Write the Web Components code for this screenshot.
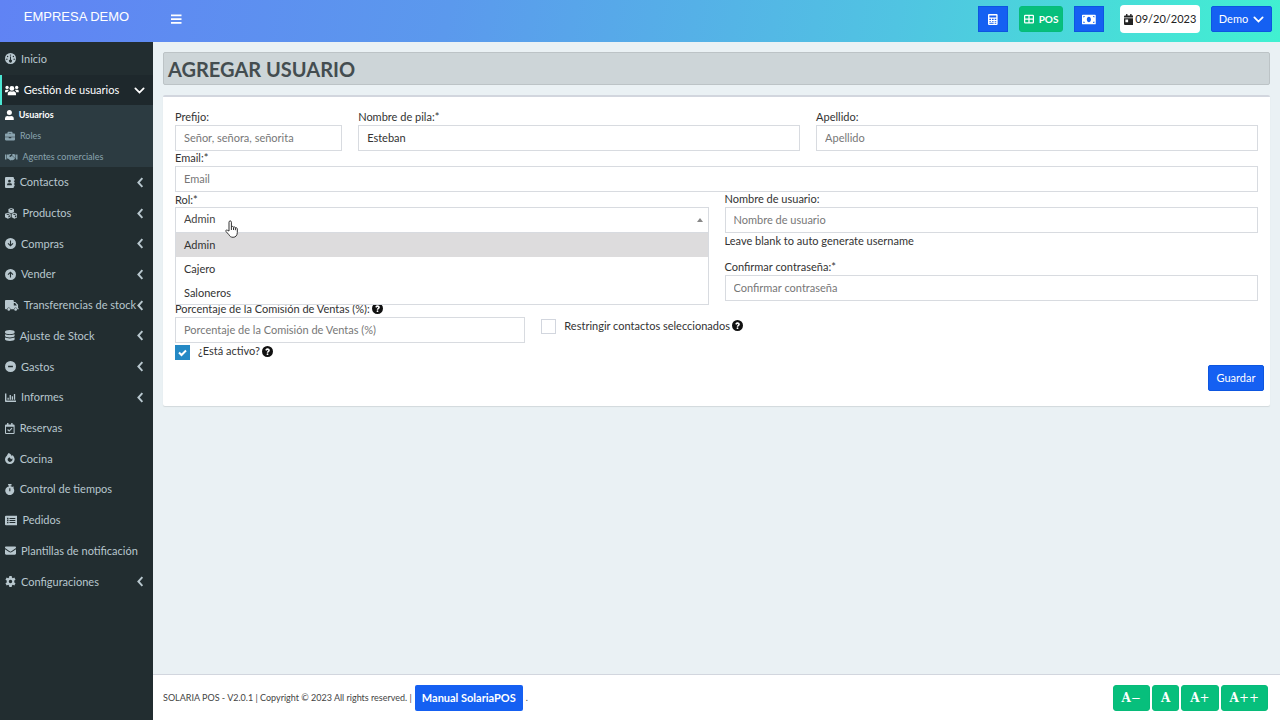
<!DOCTYPE html>
<html lang="es">
<head>
<meta charset="utf-8">
<title>Agregar usuario - Solaria POS</title>
<meta name="viewport" content="width=device-width, initial-scale=1">
<style>
  body { margin: 0; font-family: Lato, "Open Sans", sans-serif; font-size: 11px; line-height: 16px; color: #333; }
</style>
</head>
<body>
<sp-app></sp-app>
<script>
const BASE = `*, *::before, *::after { box-sizing: border-box; } button, input, select { font: inherit; margin: 0; }`;

class SpElement extends HTMLElement {
  connectedCallback() {
    if (this.shadowRoot) return;
    const tpl = document.createElement('template');
    tpl.innerHTML = `<style>${BASE}${this.css()}</style>${this.html()}`;
    this.attachShadow({ mode: 'open' }).append(tpl.content.cloneNode(true));
  }
  attr(name, fallback = '') { return this.getAttribute(name) ?? fallback; }
}

/* Icon set: [width, markup]; every icon is drawn in a box 16 units high. */
const ICONS = {
  bars: [14, '<path d="M0 2h14v2.2H0zM0 7h14v2.2H0zM0 12h14v2.2H0z"/>'],
  gauge: [16, '<path fill-rule="evenodd" d="M8 0a8 8 0 1 1 0 16A8 8 0 0 1 8 0zM8 2a1 1 0 1 0 0 2a1 1 0 0 0 0-2zM3.800 4a1 1 0 1 0 0 2a1 1 0 0 0 0-2zM12.200 4a1 1 0 1 0 0 2a1 1 0 0 0 0-2zM2.700 8a1 1 0 1 0 0 2a1 1 0 0 0 0-2zM13.300 8a1 1 0 1 0 0 2a1 1 0 0 0 0-2zM7.300 5v4.600a2.200 2.200 0 1 0 1.400 0V5z"/>'],
  users: [20, '<circle cx="3" cy="3.500" r="2.400"/><circle cx="17" cy="3.500" r="2.400"/><circle cx="10" cy="5" r="3.500"/><path d="M0 10.500V9a2 2 0 0 1 2-2h2.200c.6 0 1 .2 1.400.6C4.400 8.300 3.800 9.300 3.600 10.500zM20 10.500V9a2 2 0 0 0-2-2h-2.200c-.6 0-1 .2-1.400.6 1.200.7 1.800 1.700 2 2.900zM4 15v-2.200C4 10.700 5.600 9 7.600 9c1.500.7 3.300.7 4.800 0 2 0 3.600 1.700 3.600 3.800V15z"/>'],
  user: [14, '<circle cx="7" cy="4" r="4"/><path d="M0 16v-2.300A4.200 4.200 0 0 1 4.200 9.400c1.800.8 3.800.8 5.600 0A4.200 4.200 0 0 1 14 13.700V16z"/>'],
  briefcase: [16, '<path fill-rule="evenodd" d="M4 4V2.500C4 1.700 4.700 1 5.500 1h5c.8 0 1.500.7 1.500 1.500V4h2.500c.8 0 1.500.7 1.500 1.500V9H0V5.500C0 4.700.7 4 1.500 4zm2 0h4V3H6zM0 10h6v1.500h4V10h6v3.500c0 .8-.7 1.500-1.500 1.500h-13C.7 15 0 14.300 0 13.500z"/>'],
  handshake: [20, '<path d="M0 4h2.300v8H0zM17.700 4H20v8h-2.300zM3.200 4h2.900l1.700-1h2.600L7.300 6c-.8.800.4 2.500 1.900 1.500l2-1.500 4.400 4.100c.8 1-.6 2-1.300 1.400.3 1.200-1 1.700-1.700 1.100-.5 1-1.700.9-2.200.3-.8.8-1.900.6-2.600 0L4.600 10.500H3.200zM12 3h2.200l1.700 1h.9v6.300L11.300 5z"/>'],
  contacts: [14, '<path fill-rule="evenodd" d="M1.500 0h10A1.500 1.500 0 0 1 13 1.500V3h1v2.500h-1V7h1v2.500h-1V11h1v2.500h-1v1a1.500 1.500 0 0 1-1.500 1.500h-10A1.500 1.500 0 0 1 0 14.500v-13A1.500 1.500 0 0 1 1.500 0zM6.500 4a2 2 0 1 0 0 4a2 2 0 0 0 0-4zM3 12h7v-1a2 2 0 0 0-2-2H5a2 2 0 0 0-2 2z"/>'],
  cubes: [18, '<path fill-rule="evenodd" d="M9 0l4 1.500v4.500L9 7.500 5 6V1.500zM9 1.200L6.700 2.100 9 3l2.300-.9zM4.300 7l4 1.500v5L4.300 15.500 0 13.500v-5zM4.300 8.300l-2.500.9 2.500 1 2.500-1zM5 11.300v2.600l2.100-1v-2.500zM13.700 7L18 8.500v5l-4.300 2-4-2v-5zM13.700 8.300l-2.500.9 2.500 1 2.500-1zM14.400 11.300v2.600l2.200-1v-2.500z"/>'],
  down: [16, '<path fill-rule="evenodd" d="M8 0a8 8 0 1 1 0 16A8 8 0 0 1 8 0zM7.200 3.500v5.800L5 7.100 3.800 8.200 8 12.400l4.200-4.200L11 7.100 8.800 9.300V3.500z"/>'],
  up: [16, '<path fill-rule="evenodd" d="M8 0a8 8 0 1 1 0 16A8 8 0 0 1 8 0zM7.200 12.500V6.700L5 8.900 3.800 7.800 8 3.600l4.200 4.200L11 8.900 8.800 6.700v5.800z"/>'],
  truck: [20, '<path fill-rule="evenodd" d="M1.500 0h9.800c.8 0 1.500.7 1.500 1.500V3h2.300l3.900 3.900V12h1v1.500h-2a2.500 2.500 0 0 0-5 0H8a2.500 2.500 0 0 0-5 0H1.500C.7 13.500 0 12.800 0 12V1.500C0 .7.700 0 1.500 0zm11.300 4.500V8h4.500l-2.700-3.500z"/><circle cx="5.500" cy="13.700" r="2"/><circle cx="15.500" cy="13.700" r="2"/>'],
  database: [14, '<path d="M0 2.500C0 1.100 3.100 0 7 0s7 1.100 7 2.500v1C14 4.900 10.900 6 7 6S0 4.900 0 3.500zM0 6c3 1.600 11 1.600 14 0v2.500C14 9.900 10.900 11 7 11S0 9.900 0 8.500zM0 11c3 1.600 11 1.600 14 0v2.500c0 1.400-3.100 2.500-7 2.500s-7-1.100-7-2.500z"/>'],
  minus: [16, '<path fill-rule="evenodd" d="M8 0a8 8 0 1 1 0 16A8 8 0 0 1 8 0zM4.500 7v2.200h7V7z"/>'],
  chart: [16, '<path d="M0 2h2v10.500h14v2H1A1 1 0 0 1 0 13.500zM3.600 8.300h1.900v3H3.600zM6.700 4.300h1.900v7H6.700zM9.800 6.300h1.900v5H9.800zM12.900 3h1.900v8.300h-1.900z"/>'],
  calcheck: [14, '<path fill-rule="evenodd" d="M3 0h2v2h4V0h2v2h1.500A1.500 1.500 0 0 1 14 3.500v11a1.500 1.500 0 0 1-1.500 1.500h-11A1.500 1.500 0 0 1 0 14.500v-11A1.500 1.500 0 0 1 1.500 2H3zM1.500 5.500v9h11v-9zM3.200 10l1.200-1.200 1.700 1.600 3.500-3.500 1.200 1.200-4.700 4.800z"/>'],
  fire: [14, '<path fill-rule="evenodd" d="M5.500 0C8 1 9.600 3 9.800 4.800c.6-.5.9-1.200 1-2C13 4.700 14 7 14 9.300A6.900 6.900 0 0 1 7 16a6.900 6.900 0 0 1-7-6.700C0 6 2.400 4.600 3.300 2.800c.5-1 .9-1.700 2.200-2.800zM4 8.200A3.700 3.700 0 0 0 7 13a3.700 3.700 0 0 0 3.500-5.200L9 9.200 6.200 6z"/>'],
  stopwatch: [14, '<path fill-rule="evenodd" d="M4.500 0h5v2H8v1.200c1.100.2 2 .6 2.800 1.200l1-1L13 4.600l-1 1A6.500 6.500 0 1 1 6 3.200V2H4.500zM6.200 6v4.500h1.600V6z"/>'],
  list: [18, '<path fill-rule="evenodd" d="M1.500 1h15A1.500 1.500 0 0 1 18 2.500v11a1.500 1.500 0 0 1-1.500 1.500h-15A1.500 1.500 0 0 1 0 13.500v-11A1.500 1.500 0 0 1 1.500 1zM3 4v2h2V4zm0 3v2h2V7zm0 3v2h2v-2zM6.500 4.200v1.500H15V4.200zm0 3v1.500H15V7.200zm0 3v1.500H15v-1.500z"/>'],
  mail: [16, '<path d="M1.500 2h13c.8 0 1.500.7 1.500 1.500v.8L9.300 9.200c-.8.600-1.800.6-2.600 0L0 4.300v-.8C0 2.700.7 2 1.500 2zM0 6l6 4.300c1.200.9 2.800.9 4 0L16 6v6.500c0 .8-.7 1.500-1.500 1.500h-13C.7 14 0 13.300 0 12.500z"/>'],
  gear: [16, '<path fill-rule="evenodd" d="M6.300 0h3.400l.4 2.300 1.300.8 2.200-.8 1.700 3-1.800 1.400v2.600l1.800 1.400-1.700 3-2.200-.8-1.300.8-.4 2.300H6.300l-.4-2.300-1.300-.8-2.200.8-1.700-3 1.800-1.400V6.700L.7 5.300l1.700-3 2.200.8 1.300-.8zM8 5.500a2.500 2.500 0 1 0 0 5a2.500 2.500 0 0 0 0-5z"/>'],
  left: [10, '<path d="M7.800 1.500L2 8l5.800 6.500" fill="none" stroke="currentColor" stroke-width="2.800"/>'],
  chevdown: [16, '<path d="M2 5l6 6 6-6" fill="none" stroke="currentColor" stroke-width="2.600" stroke-linecap="round"/>'],
  calculator: [14, '<path fill-rule="evenodd" d="M1.500 0h11A1.500 1.500 0 0 1 14 1.500v13a1.500 1.500 0 0 1-1.500 1.500h-11A1.500 1.500 0 0 1 0 14.500v-13A1.500 1.500 0 0 1 1.500 0zM2 2v3h10V2zm0 5v1.600h2.300V7zm3.800 0v1.600h2.400V7zm3.900 0v1.600H12V7zM2 10v1.400h2.300V10zm3.800 0v1.400h2.400V10zm3.900 0v1.400H12V10zM2 12.700v1.300h6.200v-1.300zm7.700 0v1.300H12v-1.300z"/>'],
  table: [16, '<path fill-rule="evenodd" d="M2 1h12a2 2 0 0 1 2 2v10a2 2 0 0 1-2 2H2a2 2 0 0 1-2-2V3a2 2 0 0 1 2-2zM2 3v4h5V3zm7 0v4h5V3zM2 9v4h5V9zm7 0v4h5V9z"/>'],
  money: [20, '<path fill-rule="evenodd" d="M1 1h18a1 1 0 0 1 1 1v12a1 1 0 0 1-1 1H1a1 1 0 0 1-1-1V2a1 1 0 0 1 1-1zM10 4C8.400 4 7 5.800 7 8s1.400 4 3 4 3-1.800 3-4-1.400-4-3-4zM2 3v2a2 2 0 0 0 2-2zm14 0a2 2 0 0 0 2 2V3zM2 11v2h2a2 2 0 0 0-2-2zm14 2h2v-2a2 2 0 0 0-2 2z"/>'],
  calday: [14, '<path fill-rule="evenodd" d="M3 0h2v2h4V0h2v2h1.500A1.500 1.500 0 0 1 14 3.500V5H0V3.500A1.500 1.500 0 0 1 1.500 2H3zM0 6h14v8.500a1.500 1.500 0 0 1-1.500 1.500h-11A1.500 1.500 0 0 1 0 14.500zM2 8v4h4V8z"/>'],
  help: [16, '<path fill-rule="evenodd" d="M8 0a8 8 0 1 1 0 16A8 8 0 0 1 8 0zM4.700 5.800l1.700 1.100C6.900 6 7.300 5.700 8 5.700c.6 0 1 .3 1 .8 0 1-2 1-2 3v.3h2.100c0-1.200 2.300-1.400 2.300-3.600C11.400 4.400 9.700 3.300 8.100 3.300c-1.500 0-2.600.8-3.400 2.500zM8 10.600a1.300 1.300 0 1 0 0 2.600a1.300 1.300 0 0 0 0-2.600z"/>'],
};
class SpIcon extends SpElement {
  css() { return `:host { display: block; flex: none; height: var(--icon-size, 11px); } svg { display: block; height: 100%; fill: currentColor; }`; }
  html() {
    const [w, shape] = ICONS[this.attr('name')];
    return `<svg viewBox="0 0 ${w} 16" aria-hidden="true">${shape}</svg>`;
  }
}

class SpButton extends SpElement {
  css() { return `
    :host { display: block; }
    button { display: flex; align-items: center; justify-content: center; gap: 5px; width: 100%; height: 26px; padding: 0 8px; border: 1px solid #0d56e0; border-radius: 2px; background: #1560f2; color: #fff; white-space: nowrap; }
    :host([tone=green]) button { border-color: #07bb79; background: #07bf7c; border-radius: 3px; font-weight: 700; }
    :host([square]) { width: 30px; }
    :host([square]) button { padding: 0; border-radius: 0; }`; }
  html() { return `<button type="button" aria-label="${this.attr('label')}"><slot></slot></button>`.replace(' aria-label=""', ''); }
}

class SpHeader extends SpElement {
  css() { return `
    :host { display: grid; grid-template-columns: 153px 1fr; height: 42px; background: linear-gradient(100deg, #6083f4 0%, #5b99ed 35%, #50c4e2 70%, #41f1d1 100%); }
    .brand { color: #fff; font: 13px/33px "Liberation Sans", Arial, sans-serif; text-align: center; text-decoration: none; }
    .bar { display: flex; align-items: center; padding: 0 8px 4px 18px; }
    .menu { --icon-size: 12px; display: block; padding: 0; border: 0; background: none; color: #fff; margin-right: auto; }
    .pos { --icon-size: 10px; width: 44px; margin: 0 11px; font-size: 10px; }
    .date { --icon-size: 11px; display: flex; align-items: center; justify-content: center; gap: 2px; width: 80px; height: 28px; margin: 0 11px 0 16px; border-radius: 4px; background: #fff; color: #222; font-size: 11px; }
    .demo { --icon-size: 11px; width: 61px; }`; }
  html() { return `
    <a class="brand" href="#">EMPRESA DEMO</a>
    <div class="bar">
      <button class="menu" type="button" aria-label="Menú"><sp-icon name="bars"></sp-icon></button>
      <sp-button square label="Calculadora"><sp-icon name="calculator"></sp-icon></sp-button>
      <sp-button class="pos" tone="green"><sp-icon name="table"></sp-icon>POS</sp-button>
      <sp-button square label="Caja"><sp-icon name="money"></sp-icon></sp-button>
      <div class="date"><sp-icon name="calday"></sp-icon>09/20/2023</div>
      <sp-button class="demo">Demo <sp-icon name="chevdown"></sp-icon></sp-button>
    </div>`; }
}

class SpNavItem extends SpElement {
  css() { return `
    :host { display: grid; }
    a { display: flex; align-items: center; gap: 5px; padding: 0 9px 0 5px; color: #b8c7ce; text-decoration: none; white-space: nowrap; }
    .text { flex: 1; width: 0; }
    :host([active]) a { padding-right: 8px; background: #1e282c; color: #fff; box-shadow: inset 2px 0 #4be6d3; }
    :host([more]) a { gap: 5px; }
    :host([more]) .arrow { margin-left: -5px; }
    :host([sub]) a { --icon-size: 10px; height: 20px; color: #8aa4af; font-size: 9px; }
    :host([sub][current]) a { color: #fff; font-weight: 700; }`; }
  html() {
    const arrow = this.hasAttribute('active') ? 'chevdown' : this.hasAttribute('more') ? 'left' : '';
    return `<a href="#"><sp-icon name="${this.attr('icon')}"></sp-icon><span class="text"><slot></slot></span>${arrow ? `<sp-icon class="arrow" name="${arrow}"></sp-icon>` : ''}</a>`;
  }
}

class SpSidebar extends SpElement {
  css() { return `
    :host { display: block; background: #222d30; }
    .top { display: grid; grid-template-rows: 33px 30px; }
    .sub { display: grid; gap: 1px; background: #2c3b41; }
    .rest { display: grid; grid-auto-rows: 1fr; min-height: 430px; }`; }
  html() {
    const rest = [['contacts', 'Contactos', 1], ['cubes', 'Productos', 1], ['down', 'Compras', 1], ['up', 'Vender', 1], ['truck', 'Transferencias de stock', 1], ['database', 'Ajuste de Stock', 1], ['minus', 'Gastos', 1], ['chart', 'Informes', 1], ['calcheck', 'Reservas'], ['fire', 'Cocina'], ['stopwatch', 'Control de tiempos'], ['list', 'Pedidos'], ['mail', 'Plantillas de notificación'], ['gear', 'Configuraciones', 1]];
    return `<nav>
      <div class="top"><sp-nav-item icon="gauge">Inicio</sp-nav-item><sp-nav-item icon="users" active>Gestión de usuarios</sp-nav-item></div>
      <div class="sub">
        <sp-nav-item sub current icon="user">Usuarios</sp-nav-item>
        <sp-nav-item sub icon="briefcase">Roles</sp-nav-item>
        <sp-nav-item sub icon="handshake">Agentes comerciales</sp-nav-item>
      </div>
      <div class="rest">${rest.map(([i, t, m]) => `<sp-nav-item icon="${i}"${m ? ' more' : ''}>${t}</sp-nav-item>`).join('')}</div>
    </nav>`;
  }
}

class SpField extends SpElement {
  css() { return `
    :host { display: block; }
    .head { display: flex; align-items: center; gap: 2px; height: 15px; padding-bottom: 2px; }
    input { display: block; width: 100%; height: 26px; padding: 0 8px 2px; border: 1px solid #d8dbe0; border-radius: 0; background: #fff; color: #333; outline: 0; }
    input::placeholder { color: #777; opacity: 1; }
    sp-icon { color: #111; }`; }
  html() {
    const label = this.attr('label');
    return `<div class="head"><label for="control">${label}</label>${this.hasAttribute('help') ? '<sp-icon name="help"></sp-icon>' : ''}</div>
      <input id="control" type="${this.attr('type', 'text')}" placeholder="${this.attr('placeholder')}" value="${this.attr('value')}"><slot></slot>`;
  }
}

class SpSelect extends SpElement {
  css() { return `
    :host { display: block; }
    label { display: block; height: 15px; line-height: 15px; }
    .box { position: relative; }
    select { display: block; appearance: none; width: 100%; height: 26px; padding: 0 8px 2px; border: 1px solid #d8dbe0; border-radius: 0; background: #fff; color: #444; outline: 0; }
    .arrow { position: absolute; right: 6px; top: 11px; border: 3px solid transparent; border-top: 0; border-bottom: 4px solid #888; }
    ul { position: absolute; z-index: 1; top: 100%; left: 0; right: 0; height: 72px; margin: 0; padding: 0; list-style: none; background: #fff; border: 1px solid #d8dbe0; border-top: 0; }
    li { padding: 4px 8px; }
    li[aria-selected=true] { background: #dddcdd; }
    .hand { position: absolute; z-index: 2; left: 50px; top: 13px; width: 13px; height: 18px; }`; }
  html() {
    const options = this.attr('options').split(',');
    return `<label for="control">${this.attr('label')}</label>
      <div class="box">
        <select id="control">${options.map(o => `<option>${o}</option>`).join('')}</select>
        <span class="arrow"></span>
        <ul role="listbox" aria-label="Rol">${options.map((o, i) => `<li role="option" aria-selected="${i === 0}">${o}</li>`).join('')}</ul>
        <svg class="hand" viewBox="0 0 13 18" aria-hidden="true"><path d="M4 11V2.200C4 .4 6.400.4 6.400 2.200V7c.3-.9 2-.8 2.100.3.500-.7 1.800-.5 1.900.6.6-.5 1.900-.1 1.900 1v3.600c0 2.700-1.500 4.800-4.200 4.800-2.300 0-3.300-1-4.200-2.600L1 11.500C.3 10.300 1.700 9.500 2.500 10.300z" fill="#fff" stroke="#333" stroke-width="1"/><path d="M6.400 7v3M8.500 7.500V10M10.400 8v2.200" stroke="#333" fill="none"/></svg>
      </div>`;
  }
}

class SpCheck extends SpElement {
  css() { return `
    :host { display: flex; align-items: center; }
    .box { display: grid; flex: none; width: 15px; height: 15px; margin-right: 8px; }
    input, svg { grid-area: 1 / 1; width: 15px; height: 15px; }
    input { appearance: none; border: 1px solid #d2d6de; background: #fff; }
    input:checked { border-color: #2489c5; background: #2489c5; }
    svg { fill: none; stroke: #fff; stroke-width: 2; pointer-events: none; visibility: hidden; }
    input:checked + svg { visibility: visible; }
    label { display: flex; align-items: center; gap: 2px; padding-bottom: 2px; }
    sp-icon { color: #111; }`; }
  html() { return `<span class="box"><input id="control" type="checkbox"${this.hasAttribute('checked') ? ' checked' : ''}><svg viewBox="0 0 15 15" aria-hidden="true"><path d="M4 7.500l2.500 2.500L11 5.500"/></svg></span><label for="control">${this.attr('label')}<sp-icon name="help"></sp-icon></label>`; }
}

class SpUserForm extends SpElement {
  css() { return `
    :host { display: block; }
    form { display: grid; grid-template-columns: repeat(12, 1fr); column-gap: 16px; padding: 13px 12px 15px; border-top: 2px solid #d2d6de; border-radius: 2px; background: #fff; box-shadow: 0 1px 1px rgba(0,0,0,.1); }
    .c2 { grid-column: span 2; } .c4 { grid-column: span 4; } .c5 { grid-column: span 5; } .c6 { grid-column: span 6; } .c12 { grid-column: span 12; }
    .confirm { grid-column: 7 / span 6; margin: 11px 0 1px; }
    .restrict { align-self: center; margin-top: 8px; }
    .active { margin-bottom: 4px; }
    .save { grid-column: 1 / -1; justify-self: end; margin-right: -6px; width: 56px; }`; }
  html() { return `<form>
      <sp-field class="c2" label="Prefijo:" placeholder="Señor, señora, señorita"></sp-field>
      <sp-field class="c5" label="Nombre de pila:*" value="Esteban"></sp-field>
      <sp-field class="c5" label="Apellido:" placeholder="Apellido"></sp-field>
      <sp-field class="c12" label="Email:*" type="email" placeholder="Email"></sp-field>
      <sp-select class="c6" label="Rol:*" options="Admin,Cajero,Saloneros"></sp-select>
      <sp-field class="c6" label="Nombre de usuario:" placeholder="Nombre de usuario">Leave blank to auto generate username</sp-field>
      <sp-field class="confirm" label="Confirmar contraseña:*" type="password" placeholder="Confirmar contraseña"></sp-field>
      <sp-field class="c4" label="Porcentaje de la Comisión de Ventas (%):" placeholder="Porcentaje de la Comisión de Ventas (%)" help></sp-field>
      <sp-check class="c4 restrict" label="Restringir contactos seleccionados"></sp-check>
      <sp-check class="c12 active" label="¿Está activo?" checked></sp-check>
      <sp-button class="save">Guardar</sp-button>
    </form>`; }
}

class SpFooter extends SpElement {
  css() { return `
    :host { display: flex; align-items: center; gap: 3px; height: 46px; padding: 0 12px 0 10px; border-top: 1px solid #d2d6de; background: #fff; color: #444; }
    small { font-size: 9px; }
    a { height: 26px; padding: 0 7px; border-radius: 2px; background: #1560f2; color: #fff; line-height: 26px; font-weight: 700; text-decoration: none; }
    .sizes { display: flex; gap: 2px; margin-left: auto; font-family: "DejaVu Serif", serif; font-size: 12px; }
    .sign { font-weight: 400; }`; }
  html() { return `
    <small>SOLARIA POS - V2.0.1 | Copyright © 2023 All rights reserved. |</small><a href="#">Manual SolariaPOS</a><small>.</small>
    <div class="sizes">${['−', '', '+', '++'].map(t => `<sp-button tone="green"><span>A<span class="sign">${t}</span></span></sp-button>`).join('')}</div>`; }
}

class SpApp extends SpElement {
  css() { return `
    :host { display: grid; grid-template: auto 1fr / 153px 1fr; min-height: 100vh; }
    sp-header { grid-column: 1 / -1; }
    .page { display: flex; flex-direction: column; min-width: 0; background: #eaf1f4; }
    main { flex: 1; padding: 10px; }
    h1 { margin: 0 0 10px; padding: 1px 4px 0; border: 1px solid #bcc3c6; border-radius: 2px; background: #cdd5d8; color: #444d50; font-size: 20px; line-height: 30px; font-weight: 700; }`; }
  html() { return `
    <sp-header></sp-header>
    <sp-sidebar></sp-sidebar>
    <div class="page">
      <main><h1>AGREGAR USUARIO</h1><sp-user-form></sp-user-form></main>
      <sp-footer></sp-footer>
    </div>`; }
}

for (const [tag, cls] of Object.entries({ 'sp-icon': SpIcon, 'sp-button': SpButton, 'sp-header': SpHeader, 'sp-nav-item': SpNavItem, 'sp-sidebar': SpSidebar, 'sp-field': SpField, 'sp-select': SpSelect, 'sp-check': SpCheck, 'sp-user-form': SpUserForm, 'sp-footer': SpFooter, 'sp-app': SpApp })) customElements.define(tag, cls);
</script>
</body>
</html>
